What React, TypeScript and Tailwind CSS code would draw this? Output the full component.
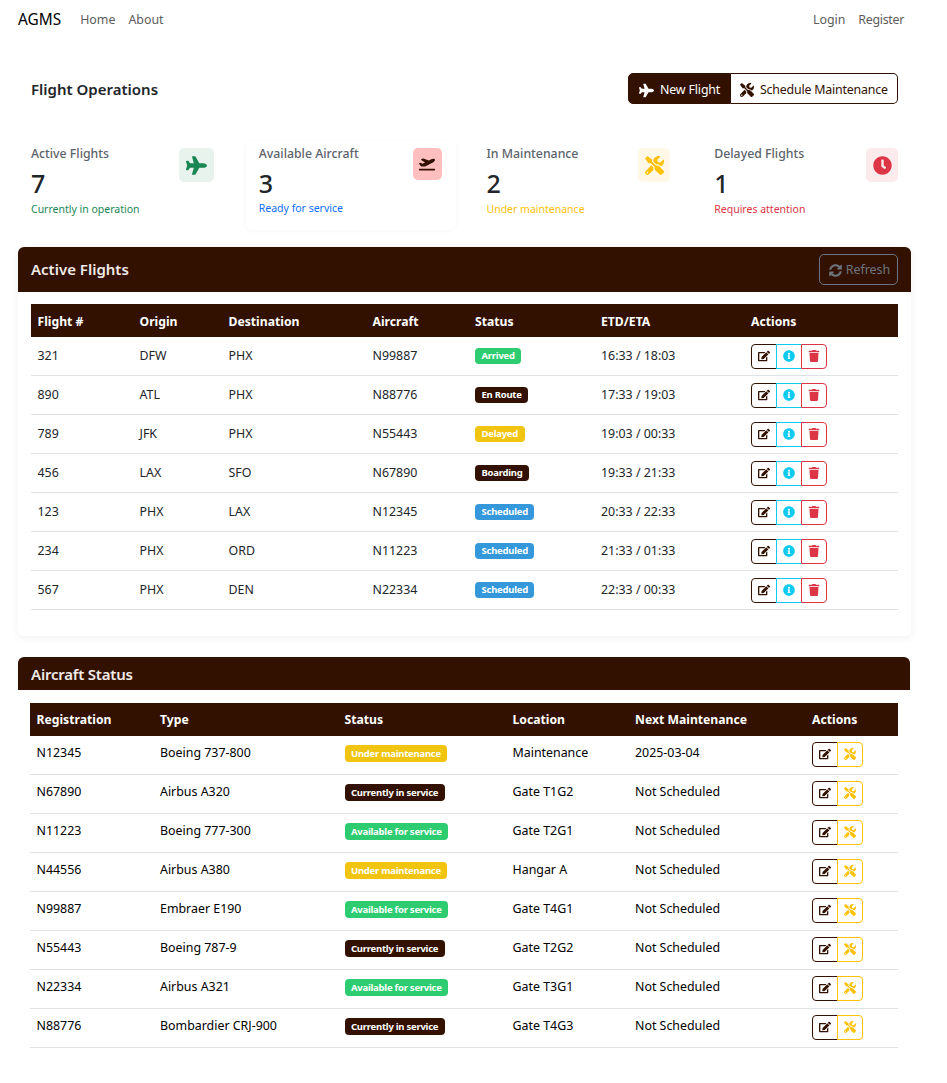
import React from "react";
import { FaPlane, FaPlaneDeparture, FaTools, FaClock, FaEdit, FaInfoCircle, FaTrash, FaSyncAlt } from "react-icons/fa";

const flights = [
  ["321", "DFW", "PHX", "N99887", "Arrived", "16:33 / 18:03"],
  ["890", "ATL", "PHX", "N88776", "En Route", "17:33 / 19:03"],
  ["789", "JFK", "PHX", "N55443", "Delayed", "19:03 / 00:33"],
  ["456", "LAX", "SFO", "N67890", "Boarding", "19:33 / 21:33"],
  ["123", "PHX", "LAX", "N12345", "Scheduled", "20:33 / 22:33"],
  ["234", "PHX", "ORD", "N11223", "Scheduled", "21:33 / 01:33"],
  ["567", "PHX", "DEN", "N22334", "Scheduled", "22:33 / 00:33"],
];
const aircraft = [
  ["N12345", "Boeing 737-800", "Under maintenance", "Maintenance", "2025-03-04"],
  ["N67890", "Airbus A320", "Currently in service", "Gate T1G2", "Not Scheduled"],
  ["N11223", "Boeing 777-300", "Available for service", "Gate T2G1", "Not Scheduled"],
  ["N44556", "Airbus A380", "Under maintenance", "Hangar A", "Not Scheduled"],
  ["N99887", "Embraer E190", "Available for service", "Gate T4G1", "Not Scheduled"],
  ["N55443", "Boeing 787-9", "Currently in service", "Gate T2G2", "Not Scheduled"],
  ["N22334", "Airbus A321", "Available for service", "Gate T3G1", "Not Scheduled"],
  ["N88776", "Bombardier CRJ-900", "Currently in service", "Gate T4G3", "Not Scheduled"],
];

function Badge({ label, extra }: { label: string; extra: string }) {
  let color = "bg-[#331100]";
  if (label === "Arrived" || label === "Available for service") color = "bg-[#2ecc71]";
  if (label === "Delayed" || label === "Under maintenance") color = "bg-[#f1c40f]";
  if (label === "Scheduled") color = "bg-[#3498db]";
  return (
    <span className={`block w-fit ${color} text-white text-[9.5px] font-bold rounded-[4px] px-[6.5px] tracking-[-0.25px] ${extra}`}>
      {label}
    </span>
  );
}

function ActionButton({ children, border, first, last }: { children: React.ReactNode; border: string; first?: boolean; last?: boolean }) {
  return (
    <span
      className={`flex items-center justify-center w-[26px] h-[25px] bg-white border ${border} ${first ? "rounded-l-[4px]" : "-ml-px"} ${last ? "rounded-r-[4px]" : ""}`}
    >
      {children}
    </span>
  );
}

function Stat({ title, value, note, noteColor, icon, box, extra, noteExtra }: { title: string; value: string; note: string; noteColor: string; icon: React.ReactNode; box: string; extra?: string; noteExtra?: string }) {
  return (
    <div className={`px-[13px] pt-[8px] h-[90px] rounded-[6px] bg-white flex justify-between items-start ${extra ?? ""}`}>
      <div>
        <div className="text-[12.3px] leading-[17px] font-medium text-[#5c636a] mt-[-3px]">{title}</div>
        <div className="text-[25px] leading-[30px] font-medium text-[#212529] mt-[6px]">{value}</div>
        <div className={`text-[10.5px] leading-[14px] ${noteExtra ?? "mt-[4px]"} ${noteColor}`}>{note}</div>
      </div>
      <div className={`flex items-center justify-center rounded-[5px] ${box}`}>{icon}</div>
    </div>
  );
}

export default function App() {
  return (
    <div className="bg-white min-h-[1083px] text-[#212529] font-['Noto_Sans',sans-serif] text-[12.4px]">
      <nav className="flex items-center justify-between h-[39px] pt-[1px] pl-[18px] pr-[43px]">
        <div className="flex items-center">
          <span className="text-[15.4px] text-black mr-[19px]">AGMS</span>
          <span className="text-[12.4px] text-[#5c5c5c] mr-[13px]">Home</span>
          <span className="text-[12.4px] text-[#5c5c5c]">About</span>
        </div>
        <div className="flex items-center text-[12.4px] text-[#5c5c5c] gap-[13px]">
          <span>Login</span>
          <span className="tracking-[-0.3px]">Register</span>
        </div>
      </nav>

      <main className="pl-[18px] pr-[36px]">
        <div className="flex items-center justify-between pl-[13px] pr-[13px] mt-[33px] h-[33px]">
          <h1 className="text-[15px] font-semibold pt-[2px]">Flight Operations</h1>
          <div className="flex h-[31px] text-[12.4px] whitespace-nowrap">
            <span className="flex items-center gap-[6px] bg-[#331100] text-white pl-[10px] pt-[3px] w-[103px] rounded-l-[5px] border border-[#331100] tracking-[-0.15px]">
              <FaPlane size={15} />New Flight
            </span>
            <span className="flex items-center gap-[6px] bg-white text-[#331100] pl-[9px] pt-[3px] w-[167px] rounded-r-[5px] border border-[#331100] border-l-0 tracking-[-0.2px]">
              <FaTools size={14} />Schedule Maintenance
            </span>
          </div>
        </div>

        <div className="grid grid-cols-4 gap-[18px] mt-[35px]">
          <Stat title="Active Flights" value="7" note="Currently in operation" noteColor="text-[#198754]"
            icon={<FaPlane size={21} className="text-[#198754]" />} box="w-[35px] h-[34px] bg-[#e8f3ee] mr-[1px]" />
          <Stat title="Available Aircraft" value="3" note="Ready for service" noteColor="text-[#0d6efd]" noteExtra="mt-[3px]" extra="shadow-[0_1px_4px_rgba(0,0,0,0.04)]"
            icon={<FaPlaneDeparture size={16} className="text-[#331100]" />} box="w-[29px] h-[32px] bg-[#ffbfbf] mr-[1px]" />
          <Stat title="In Maintenance" value="2" note="Under maintenance" noteColor="text-[#ffc107]"
            icon={<FaTools size={19} className="text-[#ffc107]" />} box="w-[32px] h-[34px] bg-[#fff8e6]" />
          <Stat title="Delayed Flights" value="1" note="Requires attention" noteColor="text-[#dc3545]"
            icon={<FaClock size={19} className="text-[#dc3545]" />} box="w-[32px] h-[34px] bg-[#fbebed]" />
        </div>

        <section className="mt-[17px] rounded-[6px] bg-white shadow-[0_2px_8px_rgba(0,0,0,0.06)] pb-[26px]">
          <div className="flex items-center justify-between bg-[#331100] rounded-t-[6px] h-[45px] px-[13px]">
            <h2 className="text-[15px] font-semibold text-[#f0ebe8]">Active Flights</h2>
            <span className="flex items-center gap-[4px] h-[31px] w-[79px] justify-center rounded-[5px] border border-[#6c757d] text-[#6c757d] text-[12.4px] pt-[2px] pl-[2px]">
              <FaSyncAlt size={13} />Refresh
            </span>
          </div>
          <div className="px-[13px] pt-[12px]">
            <table className="w-full table-fixed border-separate border-spacing-0">
              <colgroup>
                <col className="w-[102px]" /><col className="w-[89px]" /><col className="w-[144px]" /><col className="w-[102.5px]" /><col className="w-[126px]" /><col className="w-[150px]" /><col />
              </colgroup>
              <thead>
                <tr className="bg-[#331100] text-white h-[33px] text-left">
                  {["Flight #", "Origin", "Destination", "Aircraft", "Status", "ETD/ETA", "Actions"].map((h) => (
                    <th key={h} className="px-[6.5px] pt-[4px] font-bold text-[12.2px] align-middle">{h}</th>
                  ))}
                </tr>
              </thead>
              <tbody>
                {flights.map((f) => (
                  <tr key={f[0]} className="h-[39px]">
                    <td className="px-[6.5px] border-b border-[#dee2e6]">{f[0]}</td>
                    <td className="px-[6.5px] border-b border-[#dee2e6]">{f[1]}</td>
                    <td className="px-[6.5px] border-b border-[#dee2e6]">{f[2]}</td>
                    <td className="px-[6.5px] border-b border-[#dee2e6]">{f[3]}</td>
                    <td className="px-[6.5px] border-b border-[#dee2e6]"><Badge label={f[4]} extra="leading-[16px] mb-[1px]" /></td>
                    <td className="px-[6.5px] border-b border-[#dee2e6]">{f[5]}</td>
                    <td className="px-[6.5px] border-b border-[#dee2e6]">
                      <div className="flex">
                        <ActionButton border="border-[#331100]" first><FaEdit size={12} className="text-[#331100]" /></ActionButton>
                        <ActionButton border="border-[#0dcaf0]"><FaInfoCircle size={12} className="text-[#0dcaf0]" /></ActionButton>
                        <ActionButton border="border-[#dc3545]" last><FaTrash size={12} className="text-[#dc3545]" /></ActionButton>
                      </div>
                    </td>
                  </tr>
                ))}
              </tbody>
            </table>
          </div>
        </section>

        <section className="mt-[21px]">
          <div className="flex items-center bg-[#331100] rounded-t-[6px] h-[33px] px-[13px] mr-px">
            <h2 className="text-[15px] font-semibold text-[#f0ebe8] tracking-[-0.2px] pt-[2px]">Aircraft Status</h2>
          </div>
          <div className="pl-[12px] pr-[13px] pt-[13px]">
            <table className="w-full table-fixed border-separate border-spacing-0">
              <colgroup>
                <col className="w-[123.5px]" /><col className="w-[184.5px]" /><col className="w-[168px]" /><col className="w-[122.5px]" /><col className="w-[177px]" /><col />
              </colgroup>
              <thead>
                <tr className="bg-[#331100] text-white h-[33px] text-left">
                  {["Registration", "Type", "Status", "Location", "Next Maintenance", "Actions"].map((h) => (
                    <th key={h} className="px-[6.5px] pt-[2px] font-bold text-[12.2px] align-middle">{h}</th>
                  ))}
                </tr>
              </thead>
              <tbody>
                {aircraft.map((a) => (
                  <tr key={a[0]} className="h-[39px] text-black">
                    <td className="px-[6.5px] pb-[3px] border-b border-[#dee2e6]">{a[0]}</td>
                    <td className="px-[6.5px] pb-[3px] border-b border-[#dee2e6]">{a[1]}</td>
                    <td className="px-[6.5px] border-b border-[#dee2e6]"><Badge label={a[2]} extra="leading-[17px] mb-[3px]" /></td>
                    <td className="px-[6.5px] pb-[3px] border-b border-[#dee2e6]">{a[3]}</td>
                    <td className="px-[6.5px] pb-[3px] border-b border-[#dee2e6]">{a[4]}</td>
                    <td className="px-[6.5px] border-b border-[#dee2e6]">
                      <div className="flex mb-[2px]">
                        <ActionButton border="border-[#331100]" first><FaEdit size={12} className="text-[#331100]" /></ActionButton>
                        <ActionButton border="border-[#ffc107]" last><FaTools size={12} className="text-[#ffc107]" /></ActionButton>
                      </div>
                    </td>
                  </tr>
                ))}
              </tbody>
            </table>
          </div>
        </section>
      </main>
    </div>
  );
}
